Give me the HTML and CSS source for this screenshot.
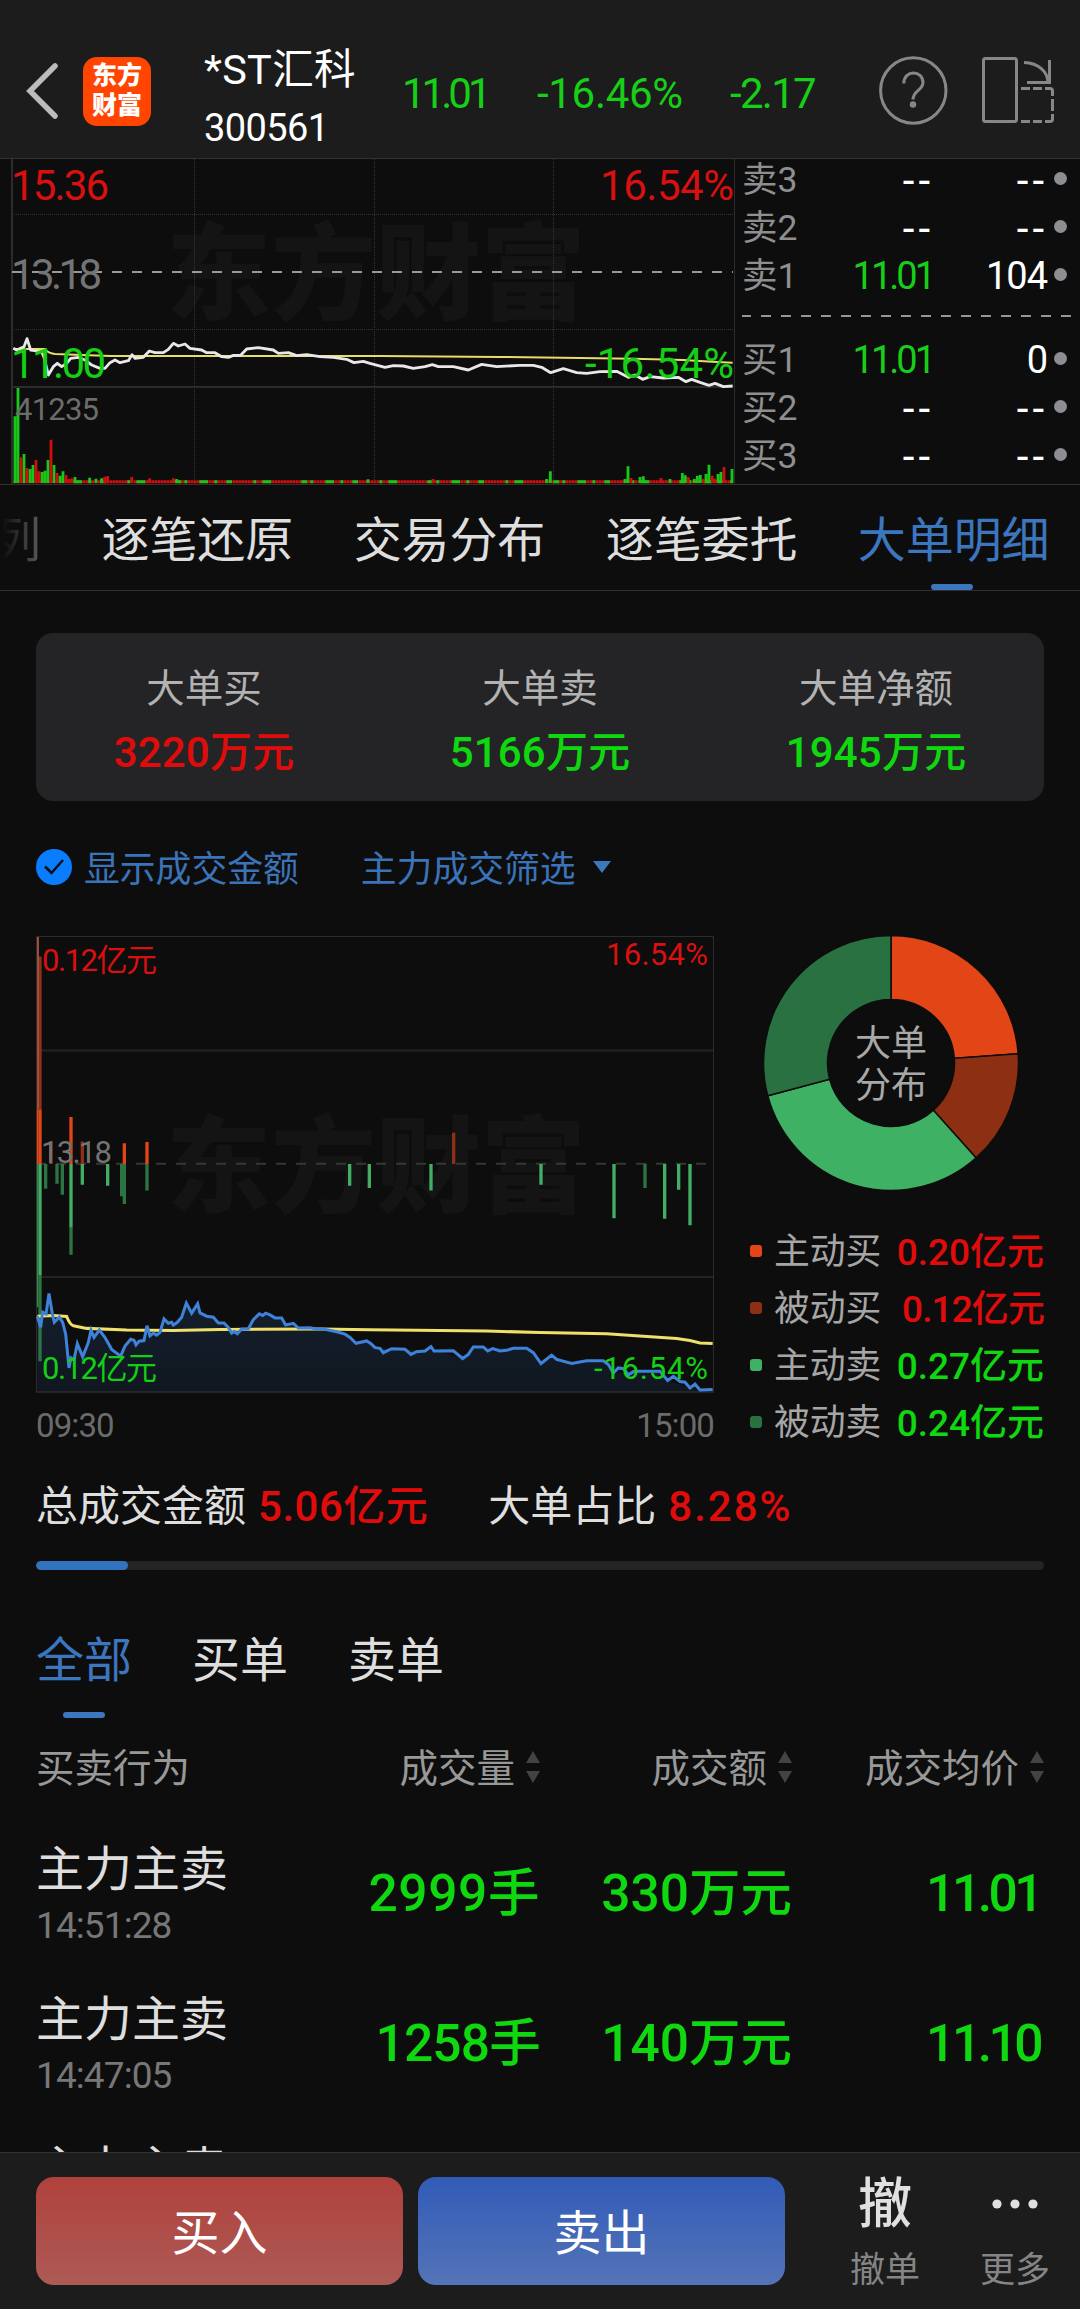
FILE: index.html
```html
<!DOCTYPE html>
<html lang="zh-CN">
<head>
<meta charset="utf-8">
<title>*ST汇科 300561</title>
<link rel="stylesheet" href="styles.css">
</head>
<body>
<div class="app">
  <header class="topbar">
    <svg class="back" viewBox="0 0 36 60" aria-hidden="true"><path d="M31 5L6 30L31 55"/></svg>
    <div class="logo"><span>东方</span><span>财富</span></div>
    <div class="stock"><span class="stock-name">*ST汇科</span><span class="stock-code">300561</span></div>
    <div class="quote"><span class="q-price">11.01</span><span class="q-pct">-16.46%</span><span class="q-diff">-2.17</span></div>
    <svg class="tools" viewBox="0 0 180 72" aria-hidden="true">
      <g class="tool-line">
        <circle cx="36.3" cy="36.5" r="32.7"/>
        <path d="M26.8 29.5C26.8 15.5 46 15.8 46 28.5C46 36.5 36 36.5 36 45.5"/>
        <rect x="106.500" y="4.5" width="33" height="63" rx="2"/>
        <path d="M147 8.5C162 9 171 18 171 29M172.500 6V28.500H150"/>
        <path d="M144 34.500h9m3 0h9m3 0h5q2.500 0 2.500 2.500v5m0 3v12m0 3v5q0 2.500-2.500 2.500h-5m-3 0h-9m-3 0h-9"/>
      </g>
      <circle class="tool-dot" cx="36" cy="50.500" r="3.200"/>
    </svg>
  </header>

  <section class="market">
    <svg class="mini-chart" viewBox="0 159 735 325">
      <text class="mark" x="166" y="311" textLength="420">东方财富</text>
      <path class="dots" d="M12 214.500H733M12 329.500H733M194.500 159V484M374.500 159V484M553.500 159V484"/>
      <path class="frame" d="M12 159V484M12 387H733"/>
      <path class="mid-dash" d="M12 272H733"/>
      <path class="frame thin" d="M734.500 159V484"/>
      <g transform="translate(0 150) scale(.33333)">
        <path class="vol-base red-line" d="M40 995H2198"/>
        <path class="vol-base green-line gaps" d="M220 995H2198"/>
        <path class="vol green-line" d="M45 999v-200M54 999v-285M72 999v-87M90 999v-42M99 999v-54M126 999v-33M135 999v-37M144 999v-69M162 999v-54M180 999v-22M189 999v-35M225 999v-18M269 999v-16M288 999v-13M305 999v-14M530 999v-12M1104 999v-11M1640 999v-12M1651 999v-35M1875 999v-12M1884 999v-50M1920 999v-18M1930 999v-20M2010 999v-12M2047 999v-30M2056 999v-23M2083 999v-12M2092 999v-22M2101 999v-24M2118 999v-27M2127 999v-55M2154 999v-27M2163 999v-33M2196 999v-42"/>
        <path class="vol red-line" d="M63 999v-77M81 999v-45M108 999v-69M117 999v-35M153 999v-130M171 999v-30M198 999v-24M207 999v-12M216 999v-14M314 999v-19M323 999v-21M395 999v-18M449 999v-14M520 999v-14M1299 999v-12M1893 999v-15M1983 999v-15M2065 999v-17M2110 999v-12M2137 999v-22M2145 999v-13M2172 999v-48"/>
        <path class="avg" d="M40 597L133 597Q148 611 165 612L330 618L1140 618L1500 621L1900 626L2050 630L2150 636L2198 638"/>
        <path class="price" d="M40 595L50 600L72 590L81 566L92 600L125 605L133 625L145 675L160 650L172 640L185 650L200 640L212 625L235 622L255 630L275 645L300 655L315 655L330 638L345 630L360 638L385 632L396 614L405 625L430 622L448 603L465 608L490 608L505 598L520 580L535 588L555 582L570 595L605 600L620 608L645 608L665 620L685 622L700 616L722 616L740 597L775 593L820 600L835 610L865 608L890 617L920 614L960 620L1000 622L1040 628L1062 638L1090 634L1110 640L1155 652L1180 647L1210 648L1240 655L1275 650L1297 644L1315 650L1360 650L1405 660L1445 643L1490 650L1560 646L1600 646L1625 652L1652 668L1690 656L1730 668L1760 670L1800 665L1850 664L1885 682L1905 675L1928 688L1950 680L1990 684L2035 682L2058 695L2075 688L2100 697L2127 706L2145 700L2170 710L2198 708"/>
      </g>
      <g class="axis-lg">
        <text class="t-red" x="11" y="200" textLength="98">15.36</text>
        <text class="t-gray" x="11" y="289" textLength="91">13.18</text>
        <text class="t-green" x="11" y="378" textLength="95">11.00</text>
        <text class="t-red" x="600" y="200" textLength="134">16.54%</text>
        <text class="t-green" x="585" y="378" textLength="149">-16.54%</text>
      </g>
      <text class="axis-vol" x="15" y="420" textLength="84">41235</text>
    </svg>
    <div class="book">
      <div class="book-row"><span class="side">卖3</span><span class="none">--</span><span class="none">--</span><i></i></div>
      <div class="book-row"><span class="side">卖2</span><span class="none">--</span><span class="none">--</span><i></i></div>
      <div class="book-row"><span class="side">卖1</span><span class="bp">11.01</span><span class="bq">104</span><i></i></div>
      <svg class="split" viewBox="0 0 332 36"><path d="M-1 13H330"/></svg>
      <div class="book-row"><span class="side">买1</span><span class="bp">11.01</span><span class="bq">0</span><i></i></div>
      <div class="book-row"><span class="side">买2</span><span class="none">--</span><span class="none">--</span><i></i></div>
      <div class="book-row"><span class="side">买3</span><span class="none">--</span><span class="none">--</span><i></i></div>
    </div>
  </section>

  <nav class="tabs">
    <span class="tab cut">列</span><span class="tab">逐笔还原</span><span class="tab">交易分布</span><span class="tab">逐笔委托</span><span class="tab active">大单明细</span>
  </nav>

  <main class="content">
    <section class="summary">
      <div><span class="s-label">大单买</span><b class="red">3220万元</b></div>
      <div><span class="s-label">大单卖</span><b class="green">5166万元</b></div>
      <div><span class="s-label">大单净额</span><b class="green">1945万元</b></div>
    </section>

    <div class="filters">
      <svg class="check" viewBox="0 0 36 36" aria-hidden="true"><circle cx="18" cy="18" r="18"/><path d="M9 17.500L15.500 24L27 11"/></svg>
      <span class="f-show">显示成交金额</span>
      <span class="f-main">主力成交筛选</span>
      <svg class="caret" viewBox="0 0 18 12" aria-hidden="true"><path d="M0 0H18L9 12Z"/></svg>
    </div>

    <section class="analysis">
      <div class="flow">
        <svg class="flow-chart" viewBox="35 935 680 459">
          <defs><linearGradient id="fill" x1="0" y1="0" x2="0" y2="1"><stop offset="0" stop-color="#3b82dc" stop-opacity=".16"/><stop offset="1" stop-color="#2f7be0" stop-opacity=".09"/></linearGradient></defs>
          <text class="mark" x="166" y="1204" textLength="420">东方财富</text>
          <path class="flow-grid" d="M36 1050.500H713M36 1277H713M36 1392H714"/>
          <path class="flow-grid thin" d="M36.500 1392V936.500H713.500V1392"/>
          <path class="flow-dash" d="M36 1163.700H713"/>
          <g transform="translate(20 920) scale(.33333 .33807)">
            <path class="area" d="M52 1172L62 1205L68 1160L78 1165L87 1105L97 1165L103 1190L118 1175L128 1190L137 1225L147 1325L153 1295L162 1300L172 1253L188 1292L205 1250L213 1213L222 1235L238 1213L255 1235L275 1270L302 1290L315 1260L332 1240L348 1257L372 1244L381 1200L390 1230L400 1222L410 1228L420 1220L432 1180L445 1193L455 1190L460 1198L472 1190L485 1175L499 1133L515 1163L533 1135L540 1162L560 1172L580 1175L595 1192L612 1192L635 1222L652 1224L665 1210L685 1210L700 1182L718 1165L737 1163L765 1177L785 1177L797 1198L820 1193L835 1207L910 1210L950 1218L975 1225L1008 1252L1040 1245L1080 1267L1250 1274L1328 1297L1360 1263L1520 1267L1563 1312L1595 1287L1655 1312L1750 1304L1780 1340L1920 1335L1943 1362L2010 1384L2040 1390L2078 1389V1394H52Z"/>
            <path class="bar c-active-buy" d="M60 560V722M153 583V722M313 660V722M381 657V722"/>
            <path class="bar c-passive-buy" d="M60 108V560M93 655V722M187 655V722M1301 629V722"/>
            <path class="edge" d="M54 50V560"/>
            <path class="edge hot" d="M53 560V722"/>
            <path class="bar c-active-sell" d="M60 722V1050M153 722V910M187 722V783M263 722V786M989 722V786M1048 722V793M1233 722V800M1563 722V783M1782 722V882M1934 722V884M1976 722V798M2010 722V903"/>
            <path class="edge green-edge" d="M53 722V1145"/>
            <path class="bar c-passive-sell" d="M60 1050V1305M77 722V795M111 722V780M127 722V813M153 910V990M305 722V817M313 722V840M381 722V800M1875 722V793"/>
            <path class="flow-avg" d="M52 1172L100 1170L140 1173Q150 1198 160 1200L200 1208L320 1213L460 1214L600 1211L900 1210L1050 1212L1400 1216L1560 1220L1760 1224L1870 1231L1970 1238L2010 1244L2040 1251L2078 1253"/>
            <path class="flow-line" d="M52 1172L62 1205L68 1160L78 1165L87 1105L97 1165L103 1190L118 1175L128 1190L137 1225L147 1325L153 1295L162 1300L172 1253L188 1292L205 1250L213 1213L222 1235L238 1213L255 1235L275 1270L302 1290L315 1260L332 1240L342 1243L348 1257L357 1246L372 1244L381 1200L390 1230L400 1222L410 1228L420 1220L432 1180L445 1193L455 1190L460 1198L472 1190L485 1175L499 1133L515 1163L533 1135L540 1162L560 1172L580 1175L595 1192L612 1192L625 1205L635 1222L643 1217L652 1224L665 1210L685 1210L700 1182L718 1165L728 1170L737 1163L750 1168L765 1177L785 1177L797 1198L820 1193L835 1207L870 1206L890 1210L910 1210L950 1218L975 1225L990 1235L1008 1252L1040 1245L1053 1253L1065 1265L1080 1267L1090 1280L1115 1268L1155 1270L1173 1285L1190 1277L1215 1275L1233 1262L1242 1275L1300 1274L1328 1297L1345 1285L1360 1263L1390 1263L1403 1275L1418 1268L1440 1275L1460 1273L1480 1267L1520 1267L1540 1280L1563 1312L1595 1287L1610 1300L1655 1312L1700 1304L1750 1304L1765 1315L1780 1340L1795 1325L1810 1327L1825 1345L1842 1335L1920 1335L1943 1362L1960 1350L1980 1365L1995 1367L2010 1384L2025 1373L2040 1390L2078 1389"/>
          </g>
          <g class="axis-sm">
            <text class="t-gray" x="41" y="1163" textLength="71">13.18</text>
            <text class="t-red" x="42" y="971" textLength="115">0.12亿元</text>
            <text class="t-green" x="42" y="1379" textLength="115">0.12亿元</text>
            <text class="t-red" x="606" y="965" textLength="102">16.54%</text>
            <text class="t-green" x="594" y="1379" textLength="114">-16.54%</text>
          </g>
        </svg>
        <div class="times"><span>09:30</span><span>15:00</span></div>
      </div>
      <div class="share">
        <div class="donut">
          <svg viewBox="-128 -128 256 256" aria-hidden="true">
            <path class="f-ab" d="M0 -127.500A127.500 127.500 0 0 1 127.160 -9.340L63.330 -4.650A63.500 63.500 0 0 0 0 -63.500Z"/>
            <path class="f-pb" d="M127.160 -9.340A127.500 127.500 0 0 1 85.150 94.900L42.410 47.260A63.500 63.500 0 0 0 63.330 -4.650Z"/>
            <path class="f-as" d="M85.150 94.900A127.500 127.500 0 0 1 -123.210 32.780L-61.360 16.330A63.500 63.500 0 0 0 42.410 47.260Z"/>
            <path class="f-ps" d="M-123.210 32.780A127.500 127.500 0 0 1 0 -127.500V-63.500A63.500 63.500 0 0 0 -61.360 16.330Z"/>
          </svg>
          <span>大单<br>分布</span>
        </div>
        <ul class="legend">
          <li><i class="k-ab"></i><span>主动买</span><b class="red">0.20亿元</b></li>
          <li><i class="k-pb"></i><span>被动买</span><b class="red one">0.12亿元</b></li>
          <li><i class="k-as"></i><span>主动卖</span><b class="green">0.27亿元</b></li>
          <li><i class="k-ps"></i><span>被动卖</span><b class="green">0.24亿元</b></li>
        </ul>
      </div>
    </section>

    <div class="totals"><span>总成交金额</span><b class="t-amount">5.06亿元</b><span>大单占比</span><b class="t-ratio">8.28%</b></div>
    <div class="progress"><i style="width:9.1%"></i></div>

    <nav class="subtabs"><span class="on">全部</span><span>买单</span><span>卖单</span></nav>

    <section class="table">
      <div class="thead">
        <span>买卖行为</span>
        <span>成交量<svg viewBox="0 0 14 32"><path d="M7 0L14 12H0ZM0 20H14L7 32Z"/></svg></span>
        <span>成交额<svg viewBox="0 0 14 32"><path d="M7 0L14 12H0ZM0 20H14L7 32Z"/></svg></span>
        <span>成交均价<svg viewBox="0 0 14 32"><path d="M7 0L14 12H0ZM0 20H14L7 32Z"/></svg></span>
      </div>
      <div class="trow"><div class="act"><span>主力主卖</span><time>14:51:28</time></div><span class="v wide">2999手</span><span class="v">330万元</span><span class="v tight">11.01</span></div>
      <div class="trow"><div class="act"><span>主力主卖</span><time>14:47:05</time></div><span class="v narrow">1258手</span><span class="v">140万元</span><span class="v tight">11.10</span></div>
      <div class="trow"><div class="act"><span>主力主卖</span></div></div>
    </section>
  </main>

  <footer class="actions">
    <button class="buy">买入</button>
    <button class="sell">卖出</button>
    <div class="action cancel"><strong>撤</strong><span>撤单</span></div>
    <div class="action more"><svg viewBox="0 0 46 54" aria-hidden="true"><circle cx="5" cy="27" r="4.600"/><circle cx="23" cy="27" r="4.600"/><circle cx="41" cy="27" r="4.600"/></svg><span>更多</span></div>
  </footer>
</div>
</body>
</html>
```
FILE: styles.css
```css
* { box-sizing: border-box; }
body { margin: 0; background: #0d0d0d; color: #dedede; font-family: Roboto, "Noto Sans CJK SC", sans-serif; }
b { font-weight: 500; }
svg { display: block; }
.app { width: 1080px; height: 2309px; display: flex; flex-direction: column; overflow: hidden; line-height: 1; }
.red { color: #e00c0c; }
.green { color: #10d810; }

.topbar { height: 159px; flex: none; display: flex; align-items: flex-start; padding: 0 22px 0 24px; background: #1c1c1c; border-bottom: 1px solid #323232; }
.back { width: 36px; height: 60px; margin-top: 60.500px; fill: none; stroke: #bcbcbc; stroke-width: 5.500; stroke-linecap: round; }
.logo { width: 68px; height: 69px; margin: 57px 0 0 23px; padding-top: 4px; border-radius: 14px; background: #ff4500; color: #fff; display: flex; flex-direction: column; align-items: center; font-size: 25px; font-weight: 900; line-height: 30px; }
.logo span { white-space: nowrap; }
.stock { width: 198px; margin: 46px 0 0 53px; color: #fff; display: flex; flex-direction: column; white-space: nowrap; }
.stock-name { font-size: 41.500px; line-height: 48px; letter-spacing: .300px; }
.stock-code { font-size: 38px; line-height: 48px; letter-spacing: -.600px; margin-top: 10px; }
.quote { display: flex; margin-top: 69px; width: 475px; font-size: 42px; line-height: 50px; color: #18cf18; }
.q-price { width: 135px; letter-spacing: -4px; }
.q-pct { width: 193px; letter-spacing: -.300px; }
.q-diff { letter-spacing: -1.700px; }
.tools { width: 180px; height: 72px; margin-top: 54px; }
.tool-line { fill: none; stroke: #878787; stroke-width: 3; }
.tool-dot { fill: #878787; }

.market { height: 326px; flex: none; display: flex; border-bottom: 1px solid #303030; }
.mini-chart { width: 735px; height: 325px; flex: none; }
.mark { font-size: 105px; font-weight: 900; fill: #141414; }
.dots { fill: none; stroke: #353535; stroke-dasharray: 1 1; }
.frame { fill: none; stroke: #2c2c2c; stroke-width: 2; }
.thin { stroke-width: 1; }
.mid-dash { fill: none; stroke: #999; stroke-width: 2; stroke-dasharray: 10 10; }
.vol-base { fill: none; stroke-width: 9; stroke-dasharray: 8 1; }
.gaps { stroke-dasharray: 26 19 9 27 17 64 9 18 27 90 18 9 9 36; }
.vol { fill: none; stroke-width: 8.500; }
.red-line { stroke: #cc1010; }
.green-line { stroke: #18c818; }
.avg { fill: none; stroke: #e8dc6a; stroke-width: 6; }
.price { fill: none; stroke: #e8e8e8; stroke-width: 8.500; stroke-linejoin: round; }
.axis-lg { font-size: 42px; }
.axis-vol { font-size: 31px; fill: #6c6c6c; }
.axis-sm { font-size: 31px; }
.t-red { fill: #d91010; }
.t-green { fill: #14cf14; }
.t-gray { fill: #747474; }

.book { flex: 1; padding: 0 12px 0 7px; display: flex; flex-direction: column; }
.book-row { height: 48px; display: grid; grid-template-columns: 80px 111px 114px 20px; align-items: center; font-size: 38px; line-height: 48px; margin-top: -3px; margin-bottom: 3px; }
.book-row span { text-align: right; white-space: nowrap; color: #fff; }
.book-row .side { text-align: left; font-size: 35.500px; color: #8f8f8f; }
.book-row .bp { color: #18cf18; letter-spacing: -3px; }
.book-row .bq { letter-spacing: -1px; }
.book-row .none { font-family: "Noto Sans CJK SC", sans-serif; font-weight: 500; letter-spacing: 2px; margin-top: -6px; }
.book-row i { width: 13px; height: 13px; border-radius: 50%; background: #8e8d92; justify-self: end; margin-bottom: 3px; }
.split { height: 36px; width: 332px; flex: none; fill: none; stroke: #969696; stroke-width: 2; stroke-dasharray: 10 10; }

.tabs { height: 106px; flex: none; border-bottom: 1px solid #303030; display: flex; gap: 60.500px; font-size: 48px; line-height: 111px; overflow: hidden; }
.tab { flex: none; position: relative; height: 105px; }
.tab:not(.cut) { letter-spacing: -.100px; }
.cut { margin-left: -7px; background: linear-gradient(90deg, #0d0d0d 20%, #5c5c5c 100%); background-clip: text; color: transparent; }
.active { color: #3c76bf; }
.active::after { content: ""; position: absolute; left: 73px; bottom: 0; width: 42px; height: 6px; border-radius: 3px; background: #3c76bf; }

.content { flex: 1; min-height: 0; overflow: hidden; padding: 42px 36px 0; }
.summary { height: 168px; border-radius: 17px; background: #242426; display: grid; grid-template-columns: repeat(3, 1fr); }
.summary div { display: flex; flex-direction: column; align-items: center; padding-top: 30px; }
.s-label { font-size: 38.500px; line-height: 52px; color: #b2b2b2; }
.summary b { font-size: 42px; line-height: 60px; letter-spacing: .200px; margin-top: 8px; }
.filters { height: 36px; margin-top: 48px; display: flex; align-items: center; font-size: 35.800px; line-height: 36px; color: #3b73b8; }
.check { width: 36px; height: 36px; fill: #0a7cff; }
.check path { fill: none; stroke: #0d0d0d; stroke-width: 2.500; }
.f-show { margin: 5px 62px 0 12px; }
.f-main { margin-top: 5px; }
.caret { width: 18px; height: 12px; margin-left: 17px; fill: #3d78bd; }

.analysis { margin-top: 50px; display: flex; justify-content: space-between; }
.flow { width: 680px; margin-left: -1px; flex: none; }
.flow-chart { width: 680px; height: 459px; }
.flow-grid { fill: none; stroke: #242424; stroke-width: 2; }
.flow-grid.thin { stroke: #2c2c2c; stroke-width: 1; }
.flow-dash { fill: none; stroke: #363636; stroke-width: 2; stroke-dasharray: 10 10; }
.bar { fill: none; stroke-width: 10; }
.c-active-buy { stroke: #e04618; }
.c-passive-buy { stroke: #8c3019; }
.c-active-sell { stroke: #43ad65; }
.c-passive-sell { stroke: #2d7445; }
.edge { fill: none; stroke: #b35c45; stroke-width: 5; }
.hot { stroke: #e04618; }
.green-edge { stroke: #36854f; }
.area { fill: url(#fill); }
.flow-avg { fill: none; stroke: #efe06c; stroke-width: 9; }
.flow-line { fill: none; stroke: #3f82da; stroke-width: 9; stroke-linejoin: miter; }
.times { height: 60px; display: flex; justify-content: space-between; align-items: center; padding: 3px 1px 0 1px; font-size: 33px; letter-spacing: -.900px; color: #6b6b6b; }
.share { width: 294px; flex: none; }
.donut { position: relative; width: 256px; height: 256px; margin: 0 0 0 12.500px; }
.donut svg { width: 256px; height: 256px; stroke: #0d0d0d; stroke-width: 1.500; }
.donut span { position: absolute; inset: 88px 0 auto 1px; text-align: center; font-size: 36px; line-height: 42px; color: #a8a8a8; }
.f-ab, .k-ab { fill: #e24617; background: #e24617; }
.f-pb, .k-pb { fill: #8c2f13; background: #8c2f13; }
.f-as, .k-as { fill: #3fb164; background: #3fb164; }
.f-ps, .k-ps { fill: #2a7142; background: #2a7142; }
.legend { list-style: none; margin: 32px 0 0; padding: 0; font-size: 35.800px; }
.legend li { height: 57px; display: flex; align-items: center; color: #a6a6a6; white-space: nowrap; }
.legend i { width: 12px; height: 12px; border-radius: 3px; margin: 0 12px 2px 0; }
.legend span, .legend b { padding-top: 2px; }
.legend b { margin-left: auto; font-size: 37px; }
.legend .one { letter-spacing: -.900px; }

.totals { margin-top: 30px; height: 46px; display: flex; align-items: center; font-size: 42px; line-height: 46px; }
.totals b { color: #e00c0c; margin-left: 12px; font-size: 42px; letter-spacing: .500px; }
.totals .t-amount { margin-right: 60px; }
.totals .t-ratio { letter-spacing: 2px; }
.progress { height: 9px; margin-top: 31px; border-radius: 5px; background: #242424; overflow: hidden; }
.progress i { display: block; height: 9px; border-radius: 5px; background: #3273c0; }
.subtabs { height: 108px; margin-top: 40px; display: flex; gap: 60px; font-size: 48px; line-height: 101px; }
.subtabs .on { color: #3c76bf; position: relative; }
.on::after { content: ""; position: absolute; left: 27px; bottom: 0; width: 42px; height: 6px; border-radius: 3px; background: #3c76bf; }
.thead, .trow { display: grid; grid-template-columns: 252px 252px 252px 252px; }
.thead { height: 101px; align-items: center; font-size: 38.500px; line-height: 52px; color: #989898; }
.thead span { display: flex; justify-content: flex-end; align-items: center; }
.thead span:first-child { justify-content: flex-start; }
.thead svg { width: 14px; height: 32px; margin: 0 0 3px 11px; fill: #434343; }
.trow { height: 150px; align-items: start; }
.act { display: flex; flex-direction: column; font-size: 48px; line-height: 60px; padding-top: 21px; white-space: nowrap; }
.act time { font-size: 37px; line-height: 40px; margin-top: 6px; color: #777; letter-spacing: -.900px; }
.v { text-align: right; font-size: 51.500px; line-height: 60px; margin-top: 45px; color: #10d810; font-weight: 500; white-space: nowrap; }
.wide { letter-spacing: .600px; }
.narrow { letter-spacing: -.800px; }
.tight { letter-spacing: -3.500px; padding-right: 4px; }

.actions { height: 157px; flex: none; background: #1c1c1c; border-top: 1px solid #323232; display: flex; padding: 24px 27px 0 36px; }
.actions button { width: 367px; height: 108px; margin: 0 15px 0 0; padding: 5px 0 0; border: 0; border-radius: 18px; font: inherit; font-size: 48px; color: #fff; }
.buy { background: linear-gradient(#b0413c, #ad5a56); }
.sell { background: linear-gradient(#325bb8, #5474b8); }
.action { display: flex; flex-direction: column; align-items: center; width: 76px; color: #858585; font-size: 35px; }
.cancel { margin-left: 47px; }
.more { margin-left: 54px; }
.action strong, .action svg { height: 54px; font-size: 54px; line-height: 56px; font-weight: 500; color: #e0e0e0; fill: #e0e0e0; }
.action svg { width: 46px; }
.action span { line-height: 40px; margin-top: 20px; }
```
